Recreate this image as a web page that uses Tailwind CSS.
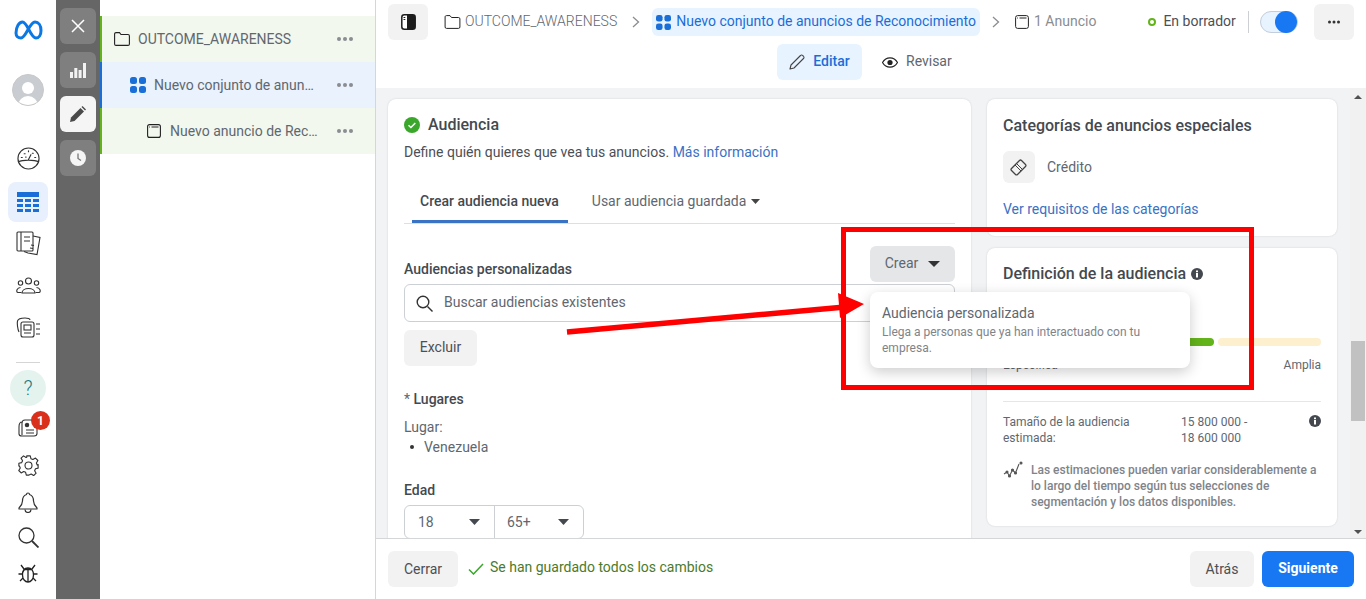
<!DOCTYPE html>
<html lang="es">
<head>
<meta charset="utf-8">
<title>Audiencia</title>
<script src="https://cdn.jsdelivr.net/npm/@tailwindcss/browser@4"></script>
</head>
<body class="bg-white">
<div class="relative flex h-[599px] w-[1366px] overflow-hidden bg-white [font-family:Roboto,sans-serif] text-[14px] text-[#4b4f56]">

  <!-- icon rail -->
  <nav class="flex w-14 shrink-0 flex-col items-center bg-white text-[#333]">
    <div class="mt-[10px] flex h-10 items-center justify-center">
      <svg width="29" height="20" viewBox="0 0 29 20" fill="none"><path d="M2 13C2 7 5 2 8.500 2 13.500 2 16.500 18 22 18c3 0 5-3 5-7.500C27 5.500 24.500 2 21 2 15.500 2 12 18 7 18c-3 0-5-2-5-5z" stroke="#0b78e3" stroke-width="3"/></svg>
    </div>
    <div class="relative mt-6 h-8 w-8 overflow-hidden rounded-full border border-[#c8c8c8] bg-[#c9ccd0]">
      <span class="absolute left-[9px] top-[7px] h-3 w-3 rounded-full bg-white"></span>
      <span class="absolute left-[5px] top-[21px] h-5 w-5 rounded-full bg-white"></span>
    </div>
    <div class="mt-9 flex h-8 items-center justify-center">
      <svg width="23" height="23" viewBox="0 0 24 24" fill="none" stroke="#333" stroke-width="1.200"><circle cx="12" cy="12" r="11"/><path d="M1.500 15.500c4-2.500 17-2.500 21 0M12 13l2.500-5" stroke-linecap="round"/><path d="M4.500 11h1M7.500 7h1M12 4v1M16 6.500h1M18.500 11h1M9 10.500h.5" stroke-linecap="round"/></svg>
    </div>
    <div class="mt-2 flex h-10 w-10 items-center justify-center rounded-lg bg-[#e7f0fc]">
      <svg width="22" height="20" viewBox="0 0 22 20" fill="#1a6ed8"><rect width="22" height="5"/><rect y="7" width="6" height="3"/><rect x="8" y="7" width="6" height="3"/><rect x="16" y="7" width="6" height="3"/><rect y="12" width="6" height="3"/><rect x="8" y="12" width="6" height="3"/><rect x="16" y="12" width="6" height="3"/><rect y="17" width="6" height="3"/><rect x="8" y="17" width="6" height="3"/><rect x="16" y="17" width="6" height="3"/></svg>
    </div>
    <div class="mt-[3px] flex h-9 items-center justify-center">
      <svg width="25" height="25" viewBox="0 0 25 25" fill="none" stroke="#333" stroke-width="1.100"><rect x="1" y="1" width="16" height="19" rx="1"/><path d="M5 1v19M8 6h6M8 10h6"/><path d="M17 5l7 1.500-3 17-9-1.500-4-1.500"/><path d="M15 14l3 .5M14 17l3 .5"/></svg>
    </div>
    <div class="mt-[6px] flex h-9 items-center justify-center">
      <svg width="25" height="17" viewBox="0 0 25 17" fill="none" stroke="#333" stroke-width="1.100"><circle cx="12.500" cy="4" r="3"/><circle cx="4.500" cy="6" r="2.200"/><circle cx="20.500" cy="6" r="2.200"/><path d="M6 16c0-6 13-6 13 0z"/><path d="M5.500 15.500H2c-2.500-.5-1-5 2.500-5M19.500 15.500H23c2.500-.5 1-5-2.500-5"/></svg>
    </div>
    <div class="mt-[6px] flex h-9 items-center justify-center">
      <svg width="25" height="21" viewBox="0 0 25 21" fill="none" stroke="#333" stroke-width="1.100"><path d="M3 15C1.500 12 1 6 1.500 4 2 2 4 1 9 1c3 0 5 .5 5 2"/><rect x="5" y="5" width="13" height="15" rx="2"/><rect x="8" y="8" width="7" height="5"/><path d="M8 16h7M20 7h4M20 12h4M20 17h4"/></svg>
    </div>
    <div class="mt-[17px] h-px w-6 bg-[#d5d5d5]"></div>
    <div class="mt-[7px] flex h-9 w-9 items-center justify-center rounded-full bg-[#e5f3ef] text-[20px] font-light text-[#1f7a80]">?</div>
    <div class="relative mt-1 flex h-9 w-9 items-center justify-center">
      <svg width="20" height="18" viewBox="0 0 20 18" fill="none" stroke="#333" stroke-width="1.100"><path d="M4 3C2 3 1 5 1 8v7c0 1.500 1 2 3 2h12c2 0 3-1 3-2.500V3c0-1.500-1-2-2.500-2H7C5 1 4 2 4 4v12"/><circle cx="9" cy="6" r="1.700" fill="#333"/><path d="M8 11h8M8 14h8"/></svg>
      <span class="absolute left-[21px] top-px flex h-[19px] w-[19px] items-center justify-center rounded-full bg-[#d9301c] text-[12px] font-bold leading-none text-white">1</span>
    </div>
    <div class="mt-px flex h-9 items-center justify-center">
      <svg width="21" height="21" viewBox="0 0 24 24" fill="none" stroke="#333" stroke-width="1.300" stroke-linejoin="round"><circle cx="12" cy="12" r="4"/><path d="M10 1h4l.8 3.200 2.200 1 3-1.700 2.700 2.800-1.700 2.900 1 2.300L23 11v4l-3 .7-1 2.300 1.700 2.800-2.800 2.700-2.900-1.700-1.800.8L12.500 23h-3l-.8-3.200-2.200-1-2.900 1.700-2.700-2.800 1.700-2.900-1-2.200L1 12.500v-3l3.200-.8 1-2.200-1.700-2.900L6.300 1 9.200 2.800 10 2.500z"/></svg>
    </div>
    <div class="mt-px flex h-9 items-center justify-center">
      <svg width="20" height="21" viewBox="0 0 20 21" fill="none" stroke="#333" stroke-width="1.200" stroke-linejoin="round"><path d="M10 1c-1 0-1.500.7-1.500 1.500C5.500 3.500 4.500 6 4.500 9c0 3-1.500 5-3.500 7v1h18v-1c-2-2-3.500-4-3.500-7 0-3-1-5.500-4-6.500C11.500 1.700 11 1 10 1z"/><path d="M7 17.500c0 4 6 4 6 0"/></svg>
    </div>
    <div class="flex h-[34px] items-center justify-center">
      <svg width="21" height="21" viewBox="0 0 21 21" fill="none" stroke="#333" stroke-width="1.300"><circle cx="8.500" cy="8.500" r="7.500"/><path d="M14 14l6.500 6.500" stroke-width="1.800"/></svg>
    </div>
    <div class="mt-[2px] flex h-[34px] items-center justify-center">
      <svg width="20" height="20" viewBox="0 0 20 20" fill="none" stroke="#222" stroke-width="1.300"><path d="M10 5c-3.500 0-5.500 3-5.500 7s2.500 7 5.500 7 5.500-3 5.500-7-2-7-5.500-7z"/><path d="M10 5v14M6 6l-3-4M14 6l3-4M4.500 11H.5M15.500 11h4M5 15l-3 3M15 15l3 3M6 6.500h8"/></svg>
    </div>
  </nav>

  <!-- dark strip -->
  <div class="flex w-11 shrink-0 flex-col items-center gap-2 bg-[#666666] pt-2">
    <div class="flex h-9 w-9 items-center justify-center rounded-md bg-[#7f7f7f]">
      <svg width="14" height="14" viewBox="0 0 14 14" stroke="#fff" stroke-width="1.500"><path d="M1 1l12 12M13 1L1 13"/></svg>
    </div>
    <div class="flex h-9 w-9 items-center justify-center rounded-md bg-[#7f7f7f]">
      <svg width="16" height="15" viewBox="0 0 16 15" fill="#f2f2f2"><rect y="9" width="3" height="6"/><rect x="4.300" y="5" width="3" height="10"/><rect x="8.600" y="7" width="3" height="8"/><rect x="13" y="0" width="3" height="15"/></svg>
    </div>
    <div class="flex h-9 w-9 items-center justify-center rounded-md bg-[#f5f5f5]">
      <svg width="16" height="16" viewBox="0 0 16 16" fill="#4a4a4a"><path d="M0 16l1-4.500L10.500 2l3.500 3.500L4.500 15z"/><path d="M11.500 1l1-1L16 3.500l-1 1z"/></svg>
    </div>
    <div class="flex h-9 w-9 items-center justify-center rounded-md bg-[#7f7f7f]">
      <svg width="16" height="16" viewBox="0 0 16 16"><circle cx="8" cy="8" r="8" fill="#f5f5f5"/><path d="M8 3.500V8.500l3 2" stroke="#777" stroke-width="1.300" fill="none"/></svg>
    </div>
  </div>

  <!-- tree -->
  <aside class="flex w-[276px] shrink-0 flex-col border-r border-[#d4d6d8] pt-4 text-[#606770]">
    <div class="flex h-[46px] items-center justify-between border-l-2 border-[#63b31a] bg-[#f3f8ee] pl-3 pr-[22px]">
      <div class="flex items-center gap-2">
        <svg width="16" height="14" viewBox="0 0 16 14" fill="none" stroke="#222" stroke-width="1.100"><path d="M.6 2C.6 1 1.200.6 2 .6h3.500L7 2.500h7c.9 0 1.400.5 1.400 1.400V12c0 .9-.5 1.400-1.400 1.400H2C1.100 13.400.6 12.900.6 12z"/></svg>
        <span class="pt-px">OUTCOME_AWARENESS</span>
      </div>
      <svg width="16" height="4" viewBox="0 0 16 4" fill="#8a8d91"><circle cx="2" cy="2" r="2"/><circle cx="8" cy="2" r="2"/><circle cx="14" cy="2" r="2"/></svg>
    </div>
    <div class="flex h-[46px] items-center justify-between border-l-2 border-[#1a6ed8] bg-[#e9f2fd] pl-7 pr-[22px]">
      <div class="flex items-center gap-2">
        <svg width="16" height="16" viewBox="0 0 16 16" fill="#1a6ed8"><rect width="7" height="7" rx="2.500"/><rect x="9" width="7" height="7" rx="2.500"/><rect y="9" width="7" height="7" rx="2.500"/><rect x="9" y="9" width="7" height="7" rx="2.500"/></svg>
        <span>Nuevo conjunto de anun…</span>
      </div>
      <svg width="16" height="4" viewBox="0 0 16 4" fill="#8a8d91"><circle cx="2" cy="2" r="2"/><circle cx="8" cy="2" r="2"/><circle cx="14" cy="2" r="2"/></svg>
    </div>
    <div class="flex h-[46px] items-center justify-between border-l-2 border-[#63b31a] bg-[#f3f8ee] pl-[45px] pr-[22px]">
      <div class="flex items-center gap-[9px]">
        <svg width="14" height="14" viewBox="0 0 14 14" fill="none" stroke="#222" stroke-width="1.100"><rect x=".6" y=".6" width="12.800" height="12.800" rx="2"/><path d="M4.500 3h7M2 3h.8"/></svg>
        <span>Nuevo anuncio de Rec…</span>
      </div>
      <svg width="16" height="4" viewBox="0 0 16 4" fill="#8a8d91"><circle cx="2" cy="2" r="2"/><circle cx="8" cy="2" r="2"/><circle cx="14" cy="2" r="2"/></svg>
    </div>
  </aside>

  <!-- main -->
  <main class="flex min-w-0 flex-1 flex-col">
    <header class="h-[88px] shrink-0 bg-white pl-3 pr-3 pt-1">
      <div class="flex h-9 items-center">
        <div class="flex h-9 w-10 items-center justify-center rounded-md bg-[#f2f2f2]">
          <svg width="15" height="16" viewBox="0 0 15 16"><rect x=".8" y=".8" width="13.400" height="14.400" rx="2.500" fill="#fff" stroke="#1c1c1c" stroke-width="1.500"/><path d="M6 1h6.500A1.500 1.500 0 0 1 14 2.500v11a1.500 1.500 0 0 1-1.500 1.500H6z" fill="#1c1c1c"/><path d="M2.500 3.500h1.800M2.500 5.500h1.800" stroke="#1c1c1c"/></svg>
        </div>
        <svg class="ml-4" width="17" height="14" viewBox="0 0 16 14" fill="none" stroke="#222" stroke-width="1"><path d="M.6 2C.6 1 1.200.6 2 .6h3.500L7 2.500h7c.9 0 1.400.5 1.400 1.400V12c0 .9-.5 1.400-1.400 1.400H2C1.100 13.400.6 12.900.6 12z"/></svg>
        <span class="ml-1 pb-[2px] font-light text-[#606770]">OUTCOME_AWARENESS</span>
        <svg class="ml-[15px]" width="8" height="12" viewBox="0 0 8 12" fill="none" stroke="#8a8d91" stroke-width="1.300"><path d="M1 1l5.500 5L1 11"/></svg>
        <div class="ml-3 flex h-7 items-center gap-[5px] rounded-md bg-[#e7f3ff] pl-1 pr-[4px] text-[#1a6ed8]">
          <svg width="15" height="15" viewBox="0 0 16 16" fill="#1a6ed8"><rect width="7" height="7" rx="2.500"/><rect x="9" width="7" height="7" rx="2.500"/><rect y="9" width="7" height="7" rx="2.500"/><rect x="9" y="9" width="7" height="7" rx="2.500"/></svg>
          <span class="pb-[2px]">Nuevo conjunto de anuncios de Reconocimiento</span>
        </div>
        <svg class="ml-3" width="8" height="12" viewBox="0 0 8 12" fill="none" stroke="#8a8d91" stroke-width="1.300"><path d="M1 1l5.500 5L1 11"/></svg>
        <svg class="ml-[15px]" width="14" height="14" viewBox="0 0 14 14" fill="none" stroke="#222" stroke-width="1"><rect x=".6" y=".6" width="12.800" height="12.800" rx="2"/><path d="M4.500 3h7M2 3h.8"/></svg>
        <span class="ml-[5px] pb-[2px] text-[#8a8d91]">1 Anuncio</span>
        <span class="ml-[52px] h-[8px] w-[8px] rounded-full border-2 border-[#63b31a] bg-white"></span>
        <span class="ml-[7px] pb-[2px] text-[#4b4f56]">En borrador</span>
        <span class="ml-3 h-[22px] w-px bg-[#ccd0d5]"></span>
        <span class="relative ml-[11px] h-[22px] w-[38px] rounded-full border border-[#c4cddb] bg-[#e7f3ff]">
          <span class="absolute right-0 top-[-1px] h-[22px] w-[22px] rounded-full bg-[#1877f2]"></span>
        </span>
        <div class="ml-auto flex h-9 w-10 items-center justify-center rounded-md bg-[#f2f2f2]">
          <svg width="12" height="4" viewBox="0 0 12 4" fill="#333"><circle cx="1.500" cy="2" r="1.500"/><circle cx="6" cy="2" r="1.500"/><circle cx="10.500" cy="2" r="1.500"/></svg>
        </div>
      </div>
      <div class="mt-1 flex h-9 items-center pl-[389px]">
        <div class="flex h-9 w-[85px] items-center justify-center gap-2 rounded-md bg-[#e7f3ff] font-medium text-[#1a6ed8]">
          <svg width="16" height="16" viewBox="0 0 16 16" fill="none" stroke="#444" stroke-width="1.100" stroke-linejoin="round"><path d="M1 15l1-4L11.500 1.500a1.500 1.500 0 0 1 2.200 0l.8.800a1.500 1.500 0 0 1 0 2.200L5 14z"/></svg>
          <span class="pb-[2px]">Editar</span>
        </div>
        <svg class="ml-5" width="16" height="11" viewBox="0 0 16 11"><path d="M.5 5.500C2.500 2 5 .8 8 .8s5.500 1.200 7.500 4.700C13.500 9 11 10.200 8 10.200S2.500 9 .5 5.500z" fill="none" stroke="#222" stroke-width="1.200"/><circle cx="8" cy="5.500" r="2.600" fill="#222"/></svg>
        <span class="ml-2 pb-[2px] text-[#606770]">Revisar</span>
      </div>
    </header>

    <div class="flex h-[450px] shrink-0 overflow-hidden bg-[#f2f3f4]">
      <div class="flex min-w-0 flex-1 gap-4 pl-3 pt-[11px]">
        <!-- audience card -->
        <section class="h-[500px] w-[583px] shrink-0 rounded-lg bg-white px-4 pt-4 shadow-[0_0_2px_rgba(0,0,0,0.15)]">
          <div class="flex h-5 items-center gap-2">
            <svg width="16" height="16" viewBox="0 0 16 16"><circle cx="8" cy="8" r="8" fill="#3aa72b"/><path d="M4.500 8.200l2.400 2.300 4.400-4.500" fill="none" stroke="#fff" stroke-width="1.500"/></svg>
            <h2 class="text-[16px] font-medium leading-5 text-[#444950]">Audiencia</h2>
          </div>
          <p class="mt-[7px] leading-5 text-[#4b4f56]">Define quién quieres que vea tus anuncios. <span class="text-[#3a72c4]">Más información</span></p>
          <div class="mt-[19px] flex h-[43px] border-b border-[#dddfe2]">
            <div class="ml-2 flex h-[42px] items-center border-b-[3px] border-[#3a72c4] pl-2 pr-[9px] pt-[2px] font-medium text-[#444950]">Crear audiencia nueva</div>
            <div class="ml-[24px] flex h-[42px] items-center gap-[5px] pb-[2px] text-[#606770]">Usar audiencia guardada
              <svg width="9" height="5" viewBox="0 0 9 5" fill="#444"><path d="M0 0h9L4.500 5z"/></svg>
            </div>
          </div>
          <div class="mt-[22px] flex h-9 items-end justify-between">
            <span class="font-medium leading-5 text-[#444950] pb-[3px]">Audiencias personalizadas</span>
            <div class="flex h-9 w-[85px] items-center justify-center gap-[10px] rounded-md bg-[#e4e6e8] text-[#606770]"><span class="pb-px">Crear</span>
              <svg width="12" height="6" viewBox="0 0 12 6" fill="#333"><path d="M0 0h12L6 6z"/></svg>
            </div>
          </div>
          <div class="mt-[2px] flex h-[38px] w-[551px] items-center gap-[11px] rounded-md border border-[#ccd0d5] pl-[11px] text-[#606770]">
            <svg width="17" height="17" viewBox="0 0 17 17" fill="none" stroke="#333" stroke-width="1.400"><circle cx="7" cy="7" r="5.800"/><path d="M11.500 11.500l5 5"/></svg>
            <span class="pb-[2px]">Buscar audiencias existentes</span>
          </div>
          <div class="mt-2 flex h-9 w-[73px] items-center justify-center rounded-md bg-[#f2f2f2] pb-[2px] text-[#4b4f56]">Excluir</div>
          <div class="mt-[23px] leading-5 text-[#606770]">* <span class="font-medium text-[#444950]">Lugares</span></div>
          <div class="mt-2 leading-5 text-[#606770]">Lugar:</div>
          <div class="flex items-center leading-5 text-[#606770]"><span class="ml-[6px] mr-[10px] h-1 w-1 rounded-full bg-[#333]"></span>Venezuela</div>
          <div class="mt-[23px] font-medium leading-5 text-[#444950]">Edad</div>
          <div class="mt-[5px] flex h-[34px] w-[180px] rounded-md border border-[#ccd0d5] text-[#606770]">
            <div class="flex w-[90px] items-center justify-between border-r border-[#ccd0d5] pl-[13px] pr-[14px]">18<svg width="11" height="6" viewBox="0 0 11 6" fill="#444950"><path d="M0 0h11L5.500 6z"/></svg></div>
            <div class="flex flex-1 items-center justify-between pl-[12px] pr-[14px]">65+<svg width="11" height="6" viewBox="0 0 11 6" fill="#444950"><path d="M0 0h11L5.500 6z"/></svg></div>
          </div>
        </section>

        <!-- right column -->
        <div class="flex w-[350px] shrink-0 flex-col gap-3">
          <section class="h-[137px] rounded-lg bg-white px-4 pt-[17px] shadow-[0_0_2px_rgba(0,0,0,0.15)]">
            <h3 class="text-[16px] font-medium leading-5 text-[#444950]">Categorías de anuncios especiales</h3>
            <div class="mt-[15px] flex items-center gap-3">
              <div class="flex h-8 w-8 items-center justify-center rounded-md bg-[#f2f2f2]">
                <svg width="18" height="18" viewBox="0 0 18 18" fill="none" stroke="#444" stroke-width="1.300" stroke-linejoin="round"><path d="M1.500 10.500l8-8c.6-.6 1.400-.6 2 0l4 4c.6.6.6 1.400 0 2l-8 8c-.6.6-1.400.6-2 0l-4-4c-.6-.6-.6-1.400 0-2z"/><path d="M5 7l6 6M6.500 5.500l6 6" stroke-width="1"/></svg>
              </div>
              <span class="text-[#606770]">Crédito</span>
            </div>
            <div class="mt-4 leading-5 text-[#3a72c4]">Ver requisitos de las categorías</div>
          </section>
          <section class="h-[278px] rounded-lg bg-white px-4 pt-4 shadow-[0_0_2px_rgba(0,0,0,0.15)]">
            <div class="flex h-[20px] items-center gap-[5px]">
              <h3 class="text-[16px] font-medium leading-5 text-[#444950]">Definición de la audiencia</h3>
              <svg width="12" height="12" viewBox="0 0 12 12"><circle cx="6" cy="6" r="6" fill="#444950"/><rect x="5" y="5" width="2" height="4.500" fill="#fff"/><rect x="5" y="2.500" width="2" height="1.700" fill="#fff"/></svg>
            </div>
            <div class="mt-[54px] flex h-2 gap-1">
              <div class="h-2 flex-[211] rounded-full bg-[#63b31a]"></div>
              <div class="h-2 flex-[103] rounded-full bg-[#fdf0cf]"></div>
            </div>
            <div class="mt-[11px] flex justify-between text-[12px] leading-4 text-[#606770]"><span>Específica</span><span>Amplia</span></div>
            <div class="mt-[28px] border-t border-[#e4e6e8] pt-[12px]">
              <div class="flex text-[12px] leading-4 text-[#606770]">
                <div class="w-[178px]">Tamaño de la audiencia<br>estimada:</div>
                <div class="flex-1">15 800 000 -<br>18 600 000</div>
                <svg class="mt-px" width="12" height="12" viewBox="0 0 12 12"><circle cx="6" cy="6" r="6" fill="#444950"/><rect x="5" y="5" width="2" height="4.500" fill="#fff"/><rect x="5" y="2.500" width="2" height="1.700" fill="#fff"/></svg>
              </div>
              <div class="mt-[16px] flex gap-2 text-[12px] font-medium leading-4 text-[#80848a]">
                <svg class="mt-[-2px] shrink-0" width="20" height="20" viewBox="0 0 20 20" fill="none" stroke="#555" stroke-width="1.100"><path d="M1 14l3-2 2.500 4 3-6 3 3 3.500-9"/><circle cx="4" cy="12" r="1" fill="#555"/><circle cx="6.500" cy="16" r="1" fill="#555"/><circle cx="9.500" cy="10" r="1" fill="#555"/><circle cx="12.500" cy="13" r="1" fill="#555"/><circle cx="18" cy="3" r="1" fill="#555"/></svg>
                <p>Las estimaciones pueden variar considerablemente a lo largo del tiempo según tus selecciones de segmentación y los datos disponibles.</p>
              </div>
            </div>
          </section>
        </div>
      </div>
      <!-- scrollbar -->
      <div class="flex w-4 shrink-0 flex-col items-center bg-[#f1f1f1] pt-[7px]">
        <span class="h-0 w-0 border-x-[4px] border-b-[4px] border-x-transparent border-b-[#505050]"></span>
        <span class="mt-[242px] h-20 w-[14px] bg-[#c1c1c1]"></span>
        <span class="mt-[109px] h-0 w-0 border-x-[4px] border-t-[4px] border-x-transparent border-t-[#505050]"></span>
      </div>
    </div>

    <footer class="flex h-[61px] shrink-0 items-center border-t border-[#d4d6d8] bg-white pl-3 pr-3">
      <div class="flex h-9 w-[70px] items-center justify-center rounded-md bg-[#f2f2f2] text-[#4b4f56]">Cerrar</div>
      <svg class="ml-[10px]" width="16" height="12" viewBox="0 0 16 12" fill="none" stroke="#3aa72b" stroke-width="1.500"><path d="M1 6.500l4.500 4.500L15 1"/></svg>
      <span class="ml-[6px] pb-[3px] text-[#4c7a2b]">Se han guardado todos los cambios</span>
      <div class="ml-auto flex h-9 w-16 items-center justify-center rounded-md bg-[#f2f2f2] text-[#4b4f56]">Atrás</div>
      <div class="ml-2 flex h-9 w-[92px] items-center justify-center rounded-md bg-[#1877f2] pb-px font-bold text-white">Siguiente</div>
    </footer>
  </main>

  <!-- dropdown -->
  <div class="absolute left-[870px] top-[292px] h-[76px] w-[320px] rounded-lg bg-white px-3 pt-3 shadow-[0_4px_14px_rgba(0,0,0,0.2)]">
    <div class="leading-[18px] text-[#606770]">Audiencia personalizada</div>
    <div class="mt-[2px] text-[12px] leading-4 text-[#80848a]">Llega a personas que ya han interactuado con tu<br>empresa.</div>
  </div>

  <!-- annotation -->
  <div class="pointer-events-none absolute left-[841px] top-[227px] h-[163px] w-[413px] border-[5px] border-[#ff0000]"></div>
  <svg class="pointer-events-none absolute left-[560px] top-[285px]" width="310" height="55" viewBox="0 0 310 55"><path d="M7 47L285 22" stroke="#f00" stroke-width="5.500"/><path d="M278 8L304 19 280 33z" fill="#f00"/></svg>
</div>
</body>
</html>
